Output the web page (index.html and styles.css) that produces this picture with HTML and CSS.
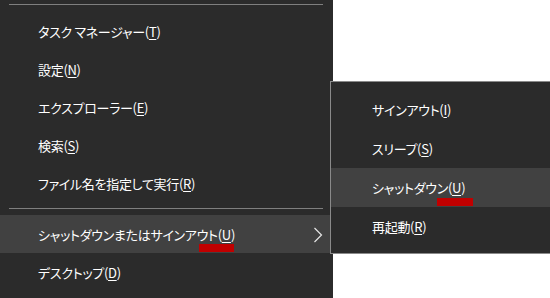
FILE: index.html
```html
<!DOCTYPE html>
<html lang="ja">
<head>
  <meta charset="UTF-8" />
  <meta name="viewport" content="width=device-width, initial-scale=1.0"/>
  <title>シャットダウンメニュー</title>
  <link rel="stylesheet" href="styles.css">
</head>
<body>

  <div class="screen">
    <div class="menu">
      <div class="sep sep-top"></div>
      <div class="item">タスク マネージャー(<u>T</u>)</div>
      <div class="item">設定(<u>N</u>)</div>
      <div class="item">エクスプローラー(<u>E</u>)</div>
      <div class="item">検索(<u>S</u>)</div>
      <div class="item">ファイル名を指定して実行(<u>R</u>)</div>
      <div class="sep"></div>
      <div class="item active">
        シャットダウンまたはサインアウト(<u>U</u>)
        <svg class="chevron" width="10" height="16" viewBox="0 0 10 16">
          <polyline points="1.5,1 8.5,8 1.5,15" fill="none" stroke="#e6e6e6" stroke-width="1.2"/>
        </svg>
        <span class="mark mark-main"></span>
      </div>
      <div class="item">デスクトップ(<u>D</u>)</div>
    </div>
    <div class="desktop"></div>
  </div>

  <!-- サブメニュー -->
  <div class="submenu">
    <div class="item">サインアウト(<u>I</u>)</div>
    <div class="item">スリープ(<u>S</u>)</div>
    <div class="item active">
      シャットダウン(<u>U</u>)
      <span class="mark mark-sub"></span>
    </div>
    <div class="item">再起動(<u>R</u>)</div>
  </div>

</body>
</html>
```

FILE: styles.css
```css
html, body {
  margin: 0;
  height: 100%;
  overflow: hidden;
}
body {
  font-family: "Noto Sans CJK JP", "Noto Sans", sans-serif;
  font-feature-settings: "palt";
  font-size: 13px;
  letter-spacing: -0.3px;
  color: #fff;
  background: #fff;
  position: relative;
}
.screen {
  display: flex;
  height: 298px;
}
.menu {
  width: 333px;
  flex: none;
  background: #2b2b2b;
  box-shadow: 2px 0 4px rgba(0,0,0,0.3);
}
.desktop {
  flex: 1;
  background: #fff;
}
.sep {
  height: 1px;
  background: #7f7f7f;
  margin: 6px 10px 6px 9px;
}
.sep-top {
  margin-top: 4px;
  margin-bottom: 7px;
}
.item {
  position: relative;
  height: 38px;
  display: flex;
  align-items: center;
  padding-left: 38px;
  white-space: nowrap;
}
.item u {
  text-decoration-thickness: 1px;
  text-underline-offset: 2px;
}
.item.active {
  background: #414141;
}
.chevron {
  position: absolute;
  left: 313px;
  top: 12px;
}
.mark {
  position: absolute;
  height: 8px;
  background: #c00000;
}
.mark-main {
  left: 199px;
  top: 29px;
  width: 35px;
}
.submenu {
  position: absolute;
  left: 330px;
  top: 81px;
  width: 240px;
  height: 156px;
  padding: 8px 0 7px;
  background: #2b2b2b;
  border: 1px solid #8a8a8a;
}
.submenu .item {
  height: 39px;
  padding-left: 41px;
}
.mark-sub {
  left: 106px;
  top: 30px;
  width: 36px;
}
```
